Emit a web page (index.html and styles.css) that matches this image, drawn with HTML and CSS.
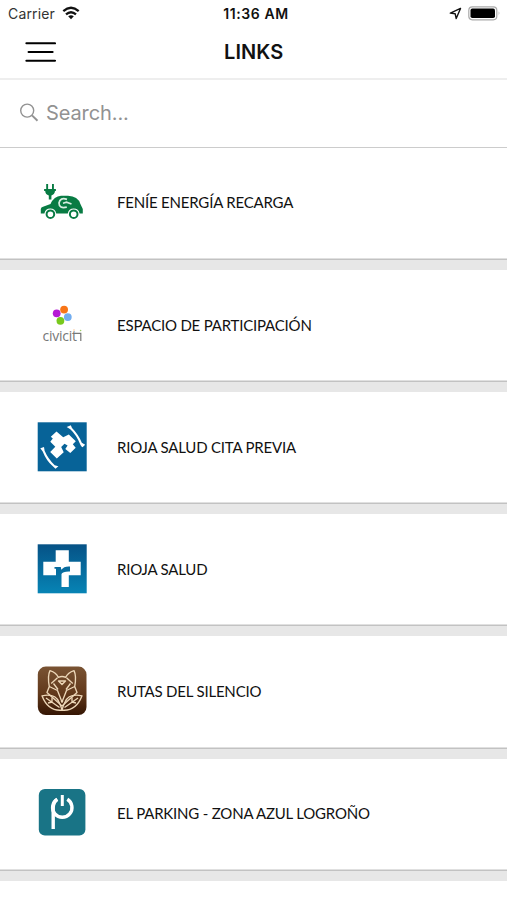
FILE: index.html
```html
<!DOCTYPE html>
<html lang="en">
<head>
<meta charset="utf-8">
<title>Links</title>
<link rel="stylesheet" href="styles.css">
</head>
<body>
<div class="status">
  <div class="carrier"><span>Carrier</span>
    <svg width="18" height="14" viewBox="0 0 18 14" fill="none" stroke="#111" stroke-width="2.3"><path d="M1.3 5.1Q9-1.7 16.7 5.1M4 8.4Q9 4 14 8.4"/><path d="M6.2 10.3Q9 8.2 11.8 10.3L9 13.2Z" fill="#111" stroke="none"/></svg>
  </div>
  <div class="time">11:36 AM</div>
  <div class="indicators">
    <svg width="13" height="13" viewBox="0 0 13 13" fill="none" stroke="#111" stroke-width="1.4" stroke-linejoin="round"><path d="M11.5 1.4 1.3 6.1 6.2 6.8 7.2 11.6Z"/></svg>
    <svg width="33" height="15" viewBox="0 0 33 15"><rect x=".8" y=".8" width="28" height="13" rx="3.5" fill="#fff" stroke="#aaa" stroke-width="1.2"/><rect x="2.5" y="2.6" width="24.5" height="9.5" rx="1.8"/><path d="M30.7 5.2Q32.5 7.3 30.7 9.4Z" fill="#aaa"/></svg>
  </div>
</div>
<header class="navbar">
  <svg class="menu" width="32" height="22" viewBox="0 0 32 22" fill="none" stroke="#000" stroke-width="2.1" stroke-linecap="round"><path d="M2.4 2.3H31M4.6 11H28.6M2.4 19.7H31"/></svg>
  <h1>LINKS</h1>
</header>
<div class="search">
  <svg width="20" height="20" viewBox="0 0 20 20" fill="none" stroke="#929292"><circle cx="7.2" cy="7.6" r="6.5" stroke-width="1.4"/><path d="M12 12.4 17.5 17.8" stroke-width="2"/></svg>
  <span>Search...</span>
</div>
<main>
  <div class="row">
    <svg viewBox="0 0 50 50"><path fill="#087b43" d="M3.8 36.5V32Q4 30.4 6 29.8L13.5 27Q17 19 24 18.7H31Q41 19 43.4 27L45.8 32V36.5H42.6A6 6 0 0 0 30.8 36.5H19.2A6 6 0 0 0 7.4 36.5Z"/><g fill="#fff" stroke="#087b43" stroke-width="2"><circle cx="13.4" cy="37.2" r="3.8"/><circle cx="36.7" cy="37.2" r="3.8"/></g><path fill="#087b43" d="M9.2 7H11.1V12H15V7H16.9V12H18.9V14H18Q17.5 17.7 14.4 18.4V22.5H11.8V18.4Q8.5 17.7 8.2 14H7.1V12H9.2Z"/><path fill="none" stroke="#d8eee2" stroke-width="1.7" d="M30 22.4Q23 20 22 26Q22 32 29.8 30.2M26 26.2 29.5 25.2 34.5 27"/></svg>
    <span>FENÍE ENERGÍA RECARGA</span>
  </div>
  <div class="row">
    <svg viewBox="0 0 50 50"><circle cx="19.7" cy="13.3" r="3.9" fill="#b51bd4"/><circle cx="27.1" cy="9.6" r="3.9" fill="#f87517"/><circle cx="30.8" cy="17.1" r="3.9" fill="#72adf0"/><circle cx="23.4" cy="20.8" r="3.9" fill="#78c91d"/><text class="brand" x="5.4" y="41" textLength="34.5">civicit</text><path d="M38 33.4H43.8V41" fill="none" stroke="#777" stroke-width="1.2"/><circle cx="37" cy="30" r=".7" fill="#f8b77e"/><circle cx="43.6" cy="30.5" r=".8" fill="#9dcc65"/></svg>
    <span>ESPACIO DE PARTICIPACIÓN</span>
  </div>
  <div class="row">
    <svg viewBox="0 0 50 50"><rect x=".7" y=".3" width="49" height="49" fill="#076398"/><g fill="#fff"><path d="M19.5 9.5 26.2 15.3 31.8 12.6 38.8 19.2 35.8 22.3 38.7 25.8 33.3 31 28.3 27 30.6 23.6 27.5 21.8 24.2 25 26.7 30.2 19.8 36.5 13.2 29.9 18.3 24.8 13.3 19.8 15.8 16.5 13.8 14.8Z"/><path d="M29.7 5 33.8 3.2 35 6Q41.5 12.5 44.8 20.7L48.2 22.8 45.5 25.2Q44.5 25 43.5 23Q39.5 13 33.3 7.3ZM3.3 26.2 7 25.1 7.6 28.8Q11 36.8 17.7 43.3L21.4 44.2 18.5 46.8 15.6 44Q9.5 39 5.7 29.5Z"/></g></svg>
    <span>RIOJA SALUD CITA PREVIA</span>
  </div>
  <div class="row">
    <svg viewBox="0 0 50 50"><defs><linearGradient id="health" x2="0" y2="1"><stop stop-color="#065286"/><stop offset="1" stop-color="#0784b5"/></linearGradient></defs><rect x=".7" y=".3" width="49" height="49" fill="url(#health)"/><path fill="#fff" d="M18.7 6.3H31.8V17.8H43.7V31.3H31.8V43H24.5V30Q25.5 27.3 33 27.5V22.5Q27 22 24.3 25.8L23.8 23H17.5V24.8H19V31.3H6.3V17.8H18.7Z"/></svg>
    <span>RIOJA SALUD</span>
  </div>
  <div class="row">
    <svg viewBox="0 0 50 50"><defs><linearGradient id="forest" x2="0" y2="1"><stop stop-color="#795333"/><stop offset=".55" stop-color="#62391b"/><stop offset="1" stop-color="#351604"/></linearGradient></defs><rect x=".8" y=".6" width="48.7" height="48.4" rx="8" fill="url(#forest)"/><g fill="none" stroke="#ecd6b7" stroke-width="1.35" stroke-linejoin="round"><path d="M12.3 20.5Q10.3 10 13 4.6Q19.2 6.5 21.3 11.3Q25 9.8 28.7 11.3Q31 6.5 37 4.6Q39.7 10 37.7 20.5L40 26.5 25 40 10 26.5ZM14.2 17.5 20.5 11.8M35.8 17.5 29.5 11.8M12.3 20.5 20.5 24.5 25 36 29.5 24.5 37.7 20.5M21.5 15H28.5L25 18.5ZM16.5 17.5 21 23.5M33.5 17.5 29 23.5"/><path d="M5 29.8Q18 27 22 36Q23.8 39.5 25 44.2Q11 45.5 5 29.8ZM45 29.8Q32 27 28 36Q26.2 39.5 25 44.2Q39 45.5 45 29.8ZM9 32 22.5 41.5M41 32 27.5 41.5M15 36V31.5M15 36 11 37M35 36V31.5M35 36 39 37"/></g><path d="M23.5 35H26.5L25 37Z" fill="#ecd6b7"/></svg>
    <span>RUTAS DEL SILENCIO</span>
  </div>
  <div class="row">
    <svg viewBox="0 0 50 50"><rect x="1.8" y=".9" width="46.6" height="46.5" rx="6" fill="#197486"/><g fill="none" stroke="#fff" stroke-width="3.4"><path d="M20.2 11.4Q16.2 14.2 16.2 20V41"/><path d="M20.3 11.3A9.7 9.7 0 1 0 30.3 11.3"/><path d="M25.3 7V18" stroke-width="3"/></g></svg>
    <span>EL PARKING - ZONA AZUL LOGROÑO</span>
  </div>
</main>
</body>
</html>
```
FILE: styles.css
```css
* { box-sizing: border-box; }
body {
  margin: 0;
  height: 900px;
  overflow: hidden;
  background: #fff;
  color: #111;
  font-family: Inter, "Liberation Sans", sans-serif;
}
svg { display: block; flex: none; }
.status {
  height: 27px;
  padding: 0 6px 0 8px;
  display: grid;
  grid-template-columns: 1fr auto 1fr;
  align-items: center;
  font-size: 14px;
}
.carrier { display: flex; align-items: center; gap: 7px; }
.carrier span { color: #333; letter-spacing: .15px; }
.carrier svg { margin-bottom: 1px; }
.time { padding-left: 3px; font-weight: 600; font-size: 14px; letter-spacing: .6px; }
.indicators { display: flex; justify-content: flex-end; align-items: center; gap: 6px; }
.navbar {
  height: 53px;
  padding: 0 0 2px 24px;
  display: grid;
  grid-template-columns: 200px 1fr;
  align-items: center;
  border-bottom: 2px solid #eee;
}
h1 { margin: 0; font-size: 20px; font-weight: 600; letter-spacing: .1px; }
.search {
  height: 67.7px;
  padding: 0 0 1px 20px;
  display: flex;
  align-items: center;
  gap: 6px;
  border-bottom: 1px solid #ccc;
  color: #929292;
  font-size: 20px;
  letter-spacing: -.1px;
}
.row {
  height: 122.2px;
  padding: 0 0 2.8px 37px;
  display: flex;
  align-items: center;
  gap: 30px;
  border-bottom: 10px solid #e7e7e7;
  box-shadow: inset 0 -1.5px #c2c2c2;
  font: 15px Lato, sans-serif;
  letter-spacing: -.2px;
}
.row svg { width: 50px; height: 50px; }
.brand { font: 400 14px "Open Sans", sans-serif; fill: #777; }
```
